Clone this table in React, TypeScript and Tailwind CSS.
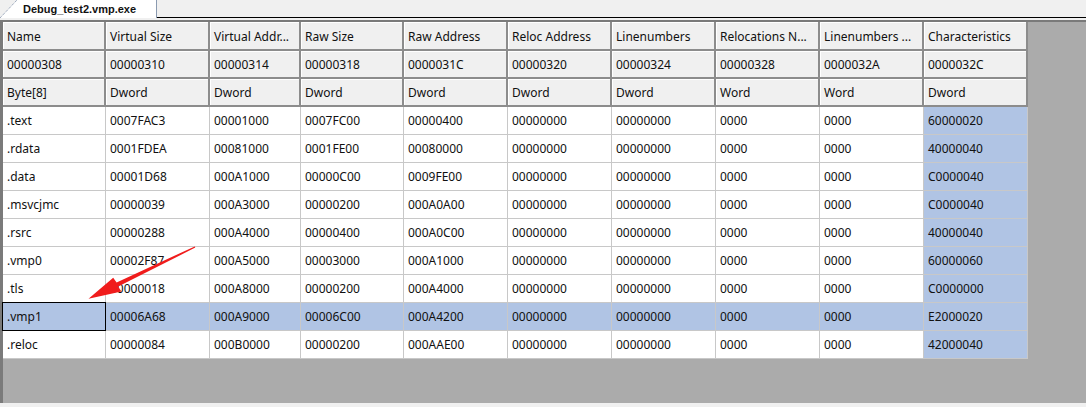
const cols = [
  { title: 'Name', offset: '00000308', type: 'Byte[8]', w: 'w-[103px]' },
  { title: 'Virtual Size', offset: '00000310', type: 'Dword', w: 'w-[104px]' },
  { title: 'Virtual Addr...', offset: '00000314', type: 'Dword', w: 'w-[91px]' },
  { title: 'Raw Size', offset: '00000318', type: 'Dword', w: 'w-[103px]' },
  { title: 'Raw Address', offset: '0000031C', type: 'Dword', w: 'w-[104px]' },
  { title: 'Reloc Address', offset: '00000320', type: 'Dword', w: 'w-[104px]' },
  { title: 'Linenumbers', offset: '00000324', type: 'Dword', w: 'w-[104px]' },
  { title: 'Relocations N...', offset: '00000328', type: 'Word', w: 'w-[104px]' },
  { title: 'Linenumbers ...', offset: '0000032A', type: 'Word', w: 'w-[104px]' },
  { title: 'Characteristics', offset: '0000032C', type: 'Dword', w: 'w-[104px]' },
];

const sections = [
  ['.text', '0007FAC3', '00001000', '0007FC00', '00000400', '00000000', '00000000', '0000', '0000', '60000020'],
  ['.rdata', '0001FDEA', '00081000', '0001FE00', '00080000', '00000000', '00000000', '0000', '0000', '40000040'],
  ['.data', '00001D68', '000A1000', '00000C00', '0009FE00', '00000000', '00000000', '0000', '0000', 'C0000040'],
  ['.msvcjmc', '00000039', '000A3000', '00000200', '000A0A00', '00000000', '00000000', '0000', '0000', 'C0000040'],
  ['.rsrc', '00000288', '000A4000', '00000400', '000A0C00', '00000000', '00000000', '0000', '0000', '40000040'],
  ['.vmp0', '00002F87', '000A5000', '00003000', '000A1000', '00000000', '00000000', '0000', '0000', '60000060'],
  ['.tls', '00000018', '000A8000', '00000200', '000A4000', '00000000', '00000000', '0000', '0000', 'C0000000'],
  ['.vmp1', '00006A68', '000A9000', '00006C00', '000A4200', '00000000', '00000000', '0000', '0000', 'E2000020'],
  ['.reloc', '00000084', '000B0000', '00000200', '000AAE00', '00000000', '00000000', '0000', '0000', '42000040'],
];

function HeadCell({ text, w, h }: { text: string; w: string; h: string }) {
  return (
    <div className={`${w} ${h} shrink-0 flex items-center overflow-hidden whitespace-nowrap border-r-2 border-b-2 border-[#8c8c8c] bg-[#f0f0f0] pl-[4px] pt-[2px] shadow-[inset_1px_1px_0_#ffffff]`}>
      {text}
    </div>
  );
}

export default function App() {
  return (
    <div className="relative h-[407px] w-[1086px] overflow-hidden bg-[#f0f0f0] text-[12px] text-[#111]" style={{ fontFamily: '"Noto Sans", "Liberation Sans", sans-serif' }}>
      {/* tab strip */}
      <div className="flex h-[18px]">
        <div className="relative flex w-[157px] shrink-0 items-center border-r border-[#8a9ab0] bg-white pl-[23px] text-[11px] font-bold" style={{ fontFamily: '"Liberation Sans", Arial, sans-serif' }}>
          <svg className="absolute left-0 top-0" width="18" height="18">
            <polygon points="0,0 17,0 0,18" fill="#f0f0f0" />
            <line x1="0" y1="18" x2="17" y2="0" stroke="#7d8ea8" strokeWidth="1" strokeDasharray="1 1" />
          </svg>
          <span className="relative">Debug_test2.vmp.exe</span>
        </div>
        <div className="flex-1 border-b-[1.5px] border-black" />
      </div>

      {/* grid area */}
      <div className="mt-[2px] flex h-[383px] border-t-2 border-l-[3px] border-[#7a7a7a] bg-[#ababab]">
        <div className="flex flex-col self-start">
          <div className="flex">
            {cols.map((c) => (
              <HeadCell key={c.title} text={c.title} w={c.w} h="h-[29px]" />
            ))}
          </div>
          <div className="flex">
            {cols.map((c) => (
              <HeadCell key={c.offset} text={c.offset} w={c.w} h="h-[28px]" />
            ))}
          </div>
          <div className="flex">
            {cols.map((c, i) => (
              <HeadCell key={i} text={c.type} w={c.w} h="h-[28px]" />
            ))}
          </div>
          {sections.map((row) => {
            const selected = row[0] === '.vmp1';
            return (
              <div key={row[0]} className="flex">
                {row.map((v, i) => {
                  const blue = selected || i === cols.length - 1;
                  return (
                    <div
                      key={i}
                      className={`${cols[i].w} relative flex h-[28px] shrink-0 items-center border-r border-b border-[#c8c8c8] pl-[4px] pt-[1px] ${blue ? 'bg-[#b0c4e4]' : 'bg-white'}`}
                    >
                      {selected && i === 0 && <div className="absolute inset-[-1px] border border-black" />}
                      {v}
                    </div>
                  );
                })}
              </div>
            );
          })}
        </div>
      </div>

      {/* red annotation arrow */}
      <svg className="pointer-events-none absolute left-0 top-0" width="1086" height="407">
        <polygon
          points="195.3,247.6 194.7,246.4 116.6,282.4 113.2,277.8 88.5,298.8 121.4,291.6 118.2,286.6"
          fill="#f01c1c"
        />
      </svg>
    </div>
  );
}
